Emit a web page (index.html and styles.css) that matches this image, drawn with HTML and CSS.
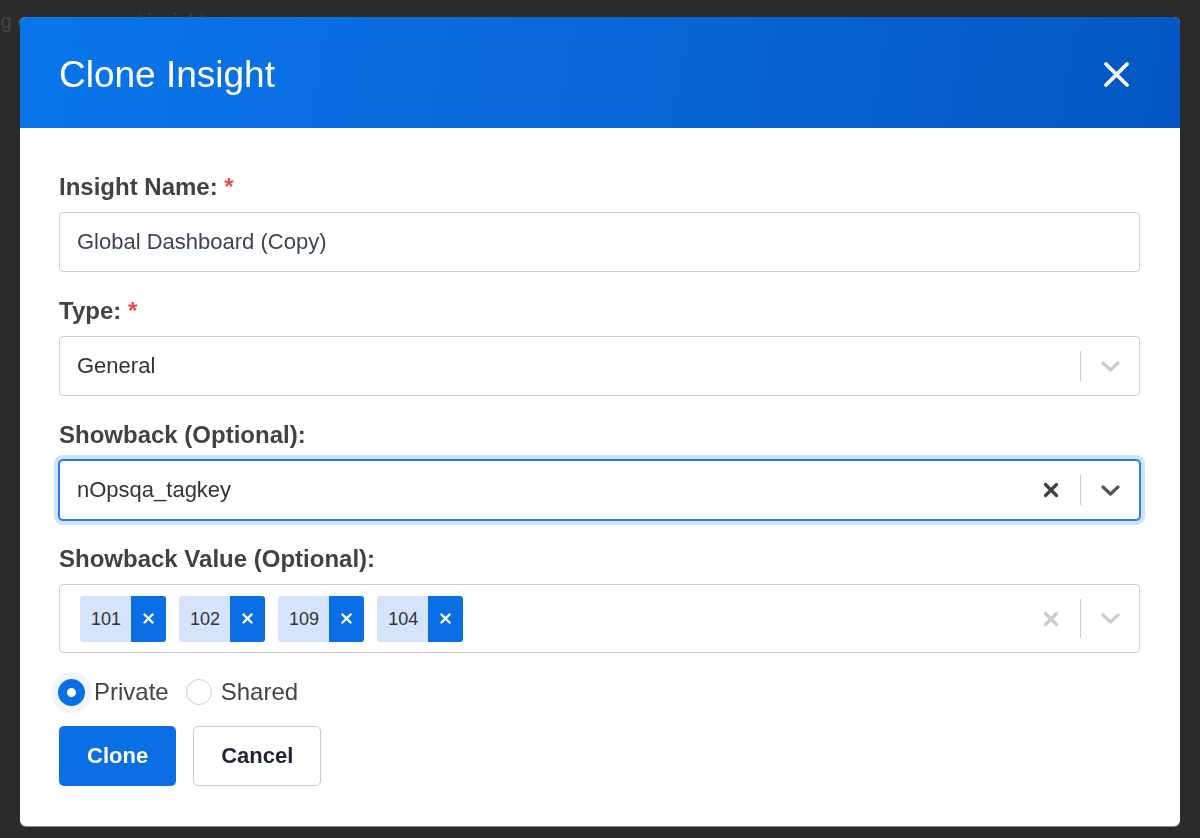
FILE: index.html
```html
<!DOCTYPE html>
<html lang="en">
  <head>
    <meta charset="UTF-8">
    <meta name="viewport" content="width=device-width, initial-scale=1.0">
    <title>Clone Insight</title>
    <link rel="stylesheet" href="styles.css">
  </head>
  <body>
    <div class="page">
      <h2 class="page-title">Showing cross-account insights</h2>
    </div>

    <div class="overlay">
      <div class="modal">
        <div class="modal-header">
          <h1>Clone Insight</h1>
          <button class="close-btn" type="button" aria-label="Close">
            <svg width="27" height="27" viewBox="0 0 27 27"><path d="M3 3L24 24M24 3L3 24" stroke="#fff" stroke-width="3.8" stroke-linecap="round"/></svg>
          </button>
        </div>

        <form class="modal-body">
          <div class="field">
            <label>Insight Name: <span class="req">*</span></label>
            <input class="text-input" type="text" value="Global Dashboard (Copy)">
          </div>

          <div class="field">
            <label>Type: <span class="req">*</span></label>
            <div class="select">
              <div class="select-value">General</div>
              <span class="select-sep"></span>
              <span class="select-arrow">
                <svg width="19" height="11" viewBox="0 0 19 11"><polyline points="2,2 9.5,9 17,2" fill="none" stroke="currentColor" stroke-width="3.2" stroke-linecap="round" stroke-linejoin="round"/></svg>
              </span>
            </div>
          </div>

          <div class="field">
            <label>Showback (Optional):</label>
            <div class="select focused">
              <div class="select-value">nOpsqa_tagkey</div>
              <span class="select-clear">
                <svg width="16" height="16" viewBox="0 0 16 16"><path d="M2.5 2.5L13.5 13.5M13.5 2.5L2.5 13.5" stroke="currentColor" stroke-width="3.2" stroke-linecap="round"/></svg>
              </span>
              <span class="select-sep"></span>
              <span class="select-arrow">
                <svg width="19" height="11" viewBox="0 0 19 11"><polyline points="2,2 9.5,9 17,2" fill="none" stroke="currentColor" stroke-width="3.2" stroke-linecap="round" stroke-linejoin="round"/></svg>
              </span>
            </div>
          </div>

          <div class="field last">
            <label>Showback Value (Optional):</label>
            <div class="select multi">
              <div class="tags">
                <span class="tag"><span class="tag-label">101</span><span class="tag-remove"><svg width="11" height="11" viewBox="0 0 11 11"><path d="M1.5 1.5L9.5 9.5M9.5 1.5L1.5 9.5" stroke="#fff" stroke-width="2.4" stroke-linecap="round"/></svg></span></span>
                <span class="tag"><span class="tag-label">102</span><span class="tag-remove"><svg width="11" height="11" viewBox="0 0 11 11"><path d="M1.5 1.5L9.5 9.5M9.5 1.5L1.5 9.5" stroke="#fff" stroke-width="2.4" stroke-linecap="round"/></svg></span></span>
                <span class="tag"><span class="tag-label">109</span><span class="tag-remove"><svg width="11" height="11" viewBox="0 0 11 11"><path d="M1.5 1.5L9.5 9.5M9.5 1.5L1.5 9.5" stroke="#fff" stroke-width="2.4" stroke-linecap="round"/></svg></span></span>
                <span class="tag"><span class="tag-label">104</span><span class="tag-remove"><svg width="11" height="11" viewBox="0 0 11 11"><path d="M1.5 1.5L9.5 9.5M9.5 1.5L1.5 9.5" stroke="#fff" stroke-width="2.4" stroke-linecap="round"/></svg></span></span>
              </div>
              <span class="select-clear">
                <svg width="16" height="16" viewBox="0 0 16 16"><path d="M2.5 2.5L13.5 13.5M13.5 2.5L2.5 13.5" stroke="currentColor" stroke-width="3.2" stroke-linecap="round"/></svg>
              </span>
              <span class="select-sep"></span>
              <span class="select-arrow">
                <svg width="19" height="11" viewBox="0 0 19 11"><polyline points="2,2 9.5,9 17,2" fill="none" stroke="currentColor" stroke-width="3.2" stroke-linecap="round" stroke-linejoin="round"/></svg>
              </span>
            </div>
          </div>

          <div class="radio-group">
            <label class="radio checked"><span class="radio-dot"></span>Private</label>
            <label class="radio"><span class="radio-dot"></span>Shared</label>
          </div>

          <div class="actions">
            <button type="submit" class="btn btn-primary">Clone</button>
            <button type="button" class="btn btn-default">Cancel</button>
          </div>
        </form>
      </div>
    </div>
  </body>
</html>
```

FILE: styles.css
```css
* {
  box-sizing: border-box;
}
body {
  margin: 0;
  height: 838px;
  overflow: hidden;
  background-color: #2b2b2b;
  font-family: "Liberation Sans", Arial, sans-serif;
}

/* page behind the dialog */
.page-title {
  margin: 0;
  padding-top: 10px;
  text-indent: -65px;
  font-size: 20px;
  line-height: 23px;
  font-weight: normal;
  color: #454545;
  white-space: nowrap;
}

.overlay {
  position: fixed;
  top: 0;
  left: 0;
  right: 0;
  bottom: 0;
  padding: 17px 20px;
}
.modal {
  background-color: #fff;
  border-radius: 6px;
  overflow: hidden;
  box-shadow: 0 1px 0 #8a8a8a;
}

.modal-header {
  height: 111px;
  display: flex;
  align-items: center;
  justify-content: space-between;
  padding: 0 50px 0 39px;
  background: linear-gradient(100deg, #0a75eb 0%, #0868d9 50%, #0457c3 100%);
}
.modal-header h1 {
  margin: 4px 0 0;
  font-size: 37px;
  font-weight: normal;
  color: #fff;
}
.close-btn {
  display: flex;
  margin-top: 3px;
  padding: 0;
  border: 0;
  background: none;
  cursor: pointer;
}

.modal-body {
  padding: 45px 40px 40px 39px;
}
.field {
  margin-bottom: 25px;
}
.field.last {
  margin-bottom: 19px;
}
.field label {
  display: block;
  margin-bottom: 11px;
  font-size: 24px;
  line-height: 28px;
  font-weight: bold;
  color: #424242;
}
.req {
  color: #e84a4a;
}

.text-input {
  display: block;
  width: 100%;
  height: 60px;
  padding: 0 17px;
  border: 1px solid #ccc;
  border-radius: 4px;
  font-family: inherit;
  font-size: 22px;
  color: #3b4555;
  outline: none;
}

/* select boxes */
.select {
  display: flex;
  align-items: center;
  height: 60px;
  border: 1px solid #ccc;
  border-radius: 4px;
  background-color: #fff;
}
.select-value {
  flex: 1;
  padding-left: 17px;
  font-size: 22px;
  color: #333;
}
.select-clear {
  display: flex;
  margin-right: 21px;
  color: #ccc;
}
.select-sep {
  align-self: stretch;
  width: 1px;
  margin: 14px 0;
  background-color: #ccc;
}
.select-arrow {
  display: flex;
  padding: 0 19px 0 20px;
  color: #ccc;
}
.select.focused {
  border-color: #2a7de9;
  box-shadow: 0 0 0 1px #2a7de9, 0 0 0 5px #d2e2fb;
}
.select.focused .select-clear {
  color: #3f3f3f;
}
.select.focused .select-arrow {
  color: #555;
}

.select.multi {
  height: 69px;
}
.tags {
  flex: 1;
  display: flex;
  gap: 13px;
  padding: 0 20px;
}
.tag {
  display: flex;
  height: 46px;
  border-radius: 3px;
  overflow: hidden;
}
.tag-label {
  padding: 0 10px 0 11px;
  line-height: 46px;
  font-size: 18px;
  color: #333;
  background-color: #d5e4fb;
}
.tag-remove {
  width: 35px;
  display: flex;
  align-items: center;
  justify-content: center;
  background-color: #0a6fe5;
}

/* visibility radios */
.radio-group {
  display: flex;
  align-items: center;
  height: 40px;
}
.radio {
  display: flex;
  align-items: center;
  font-size: 24px;
  color: #444;
}
.radio + .radio {
  margin-left: 17px;
}
.radio-dot {
  width: 26px;
  height: 26px;
  margin-right: 9px;
  border: 1.5px solid #cfcfcf;
  border-radius: 50%;
  background-color: #fff;
}
.radio.checked .radio-dot {
  width: 27px;
  height: 27px;
  margin-left: -1px;
  border: 9.5px solid #0a6fe5;
  box-shadow: 0 0 0 7px #f0f4fd;
}

.actions {
  display: flex;
  margin-top: 14px;
}
.btn {
  height: 60px;
  border-radius: 5px;
  font-family: inherit;
  font-size: 22px;
  font-weight: bold;
  cursor: pointer;
}
.btn-primary {
  padding: 0 28px;
  border: 0;
  color: #fff;
  background-color: #0a6fe5;
}
.btn-default {
  margin-left: 17px;
  padding: 0 27px;
  border: 1.5px solid #ccc;
  color: #1f2533;
  background-color: #fff;
}
```
